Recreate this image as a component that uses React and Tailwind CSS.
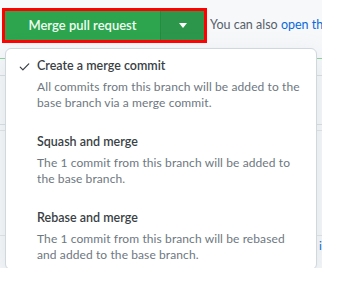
import React from "react";

function Item({ checked, title, desc, top }) {
  return (
    <div className={`flex px-[12px] pb-[9px] ${top ? "pt-[7px]" : "pt-[12px]"}`}>
      <div className="w-[19px] shrink-0 pt-[4px]">
        {checked && (
          <svg width="13" height="13" viewBox="0 0 16 16" fill="#3a3f45">
            <path d="M13.78 4.22a.75.75 0 0 1 0 1.06l-7.25 7.25a.75.75 0 0 1-1.06 0L2.22 9.28a.751.751 0 0 1 .018-1.042.751.751 0 0 1 1.042-.018L6 10.94l6.72-6.72a.75.75 0 0 1 1.06 0Z" />
          </svg>
        )}
      </div>
      <div>
        <div className="text-[12.5px] leading-[20px] font-semibold text-[#3a3f45]">{title}</div>
        <div className="text-[12px] leading-[16px] tracking-[0.1px] text-[#6e7781] mt-[3px]">{desc}</div>
      </div>
    </div>
  );
}

export default function App() {
  return (
    <div
      className="w-[342px] h-[287px] bg-white relative overflow-hidden"
      style={{ fontFamily: 'Lato, "Liberation Sans", sans-serif' }}
    >
      <div className="w-[322px] h-[268px] bg-[#f6f8fa] relative overflow-hidden">
        <div className="flex items-center pt-[8px] pl-[2px]">
          <div className="border-[3px] border-[#ff0000] flex shrink-0">
            <div className="w-[155px] h-[29px] bg-[#2da44e] flex items-center justify-center text-[13px] font-semibold text-[#f0fff4]">
              Merge pull request
            </div>
            <div className="w-[44px] h-[29px] bg-[#2c974b] border-l border-[#258a42] flex items-center justify-center">
              <svg width="8" height="5" viewBox="0 0 8 5">
                <path d="M0 0h8L4 5z" fill="#ffffff" />
              </svg>
            </div>
          </div>
          <div className="ml-[3px] text-[12.5px] whitespace-nowrap text-[#57606a]">
            You can also <span className="text-[#0969da]">open this</span>
          </div>
        </div>
        <div className="absolute left-0 right-0 top-[58px] h-[1px] bg-[#8fd19e]" />
        <div className="absolute left-0 right-0 top-[75px] h-[1px] bg-[#d8dee4]" />
        <div className="absolute left-0 right-0 top-[124px] h-[1px] bg-[#d8dee4]" />
        <div className="absolute left-0 right-0 top-[130px] h-[1px] bg-[#e1e4e8]" />
        <div className="absolute left-0 right-0 top-[235px] h-[1px] bg-[#e1e4e8]" />
        <div className="absolute left-[319px] top-[239px] text-[12px] leading-[14px] text-[#0969da]">i</div>
        <div className="absolute left-[5px] top-[48px] w-[312px] h-[222px] bg-white border border-[#d0d7de] rounded-[6px] shadow-[0_8px_24px_rgba(140,149,159,0.2)] overflow-hidden flex flex-col">
          <Item
            checked
            top
            title="Create a merge commit"
            desc={<>All commits from this branch will be added to the<br />base branch via a merge commit.</>}
          />
          <div className="h-[1px] bg-[#d8dee4]" />
          <Item
            title="Squash and merge"
            desc={<>The 1 commit from this branch will be added to<br />the base branch.</>}
          />
          <div className="h-[1px] bg-[#d8dee4]" />
          <Item
            title="Rebase and merge"
            desc={<>The 1 commit from this branch will be rebased<br />and added to the base branch.</>}
          />
        </div>
      </div>
    </div>
  );
}
